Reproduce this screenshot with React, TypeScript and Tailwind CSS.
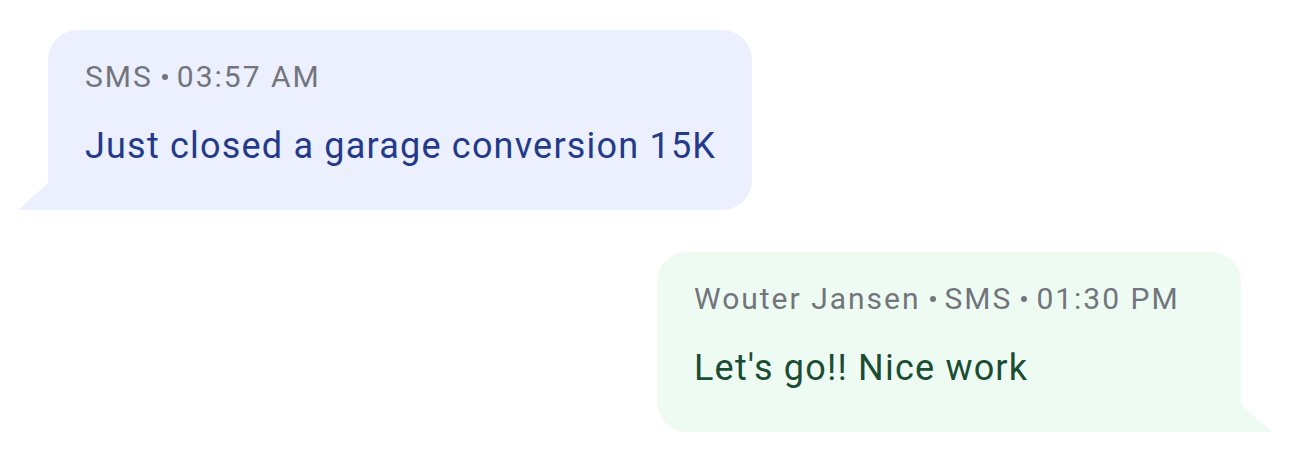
import React from 'react';

const font = { fontFamily: 'Roboto, "Noto Sans", sans-serif' };

const Dot = () => <span className="mx-[9px] inline-block align-middle w-[6px] h-[6px] rounded-full bg-current relative -top-[2px]" />;

type Msg = { meta: string[]; text: string; out: boolean };

const messages: Msg[] = [
  { meta: ['SMS', '03:57 AM'], text: 'Just closed a garage conversion 15K', out: false },
  { meta: ['Wouter Jansen', 'SMS', '01:30 PM'], text: "Let's go!! Nice work", out: true },
];

const Bubble: React.FC<{ m: Msg }> = ({ m }) => (
  <div className={`relative ${m.out ? 'self-end mr-[49px] w-[584px] bg-[#edfbf3] rounded-[30px] rounded-br-none' : 'ml-[48px] w-[704px] bg-[#eceffd] rounded-[30px] rounded-bl-none'} pl-[37px] pt-[28px] pb-[40px]`}>
    <p className="text-[30px] leading-[38px] text-[#72757c] tracking-[2px] whitespace-nowrap">
      {m.meta.map((s, i) => (
        <React.Fragment key={i}>{i > 0 && <Dot />}{s}</React.Fragment>
      ))}
    </p>
    <p className={`mt-[26px] text-[36px] leading-[48px] tracking-[1.2px] whitespace-nowrap ${m.out ? 'text-[#1b4d35]' : 'text-[#233a8a]'}`}>{m.text}</p>
    {m.out ? (
      <svg className="absolute right-[-31px] bottom-0" width="31" height="27" viewBox="0 0 31 27">
        <polygon points="0,0 31,27 0,27" fill="#edfbf3" />
      </svg>
    ) : (
      <svg className="absolute left-[-30px] bottom-0" width="30" height="27" viewBox="0 0 30 27">
        <polygon points="30,0 0,27 30,27" fill="#eceffd" />
      </svg>
    )}
  </div>
);

export default function App() {
  return (
    <div className="w-[1290px] h-[473px] bg-white flex flex-col gap-[42px] pt-[30px]" style={font}>
      {messages.map((m, i) => <Bubble key={i} m={m} />)}
    </div>
  );
}
